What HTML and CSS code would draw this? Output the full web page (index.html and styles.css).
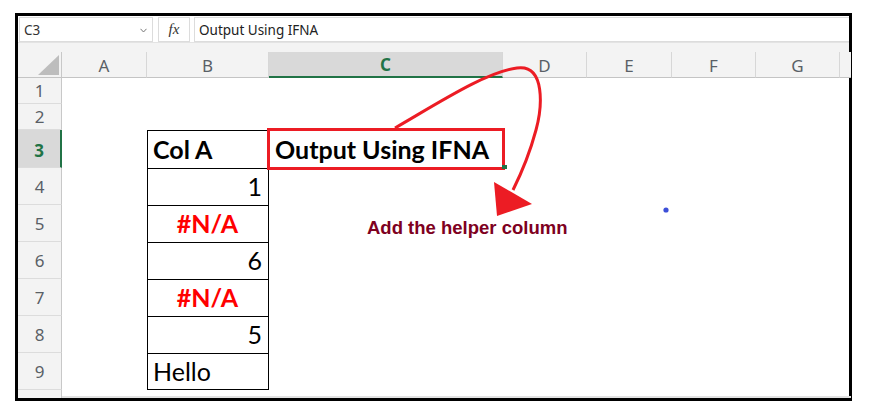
FILE: index.html
```html
<!DOCTYPE html>
<html>
<head>
<meta charset="utf-8">
<link rel="stylesheet" href="styles.css">
</head>
<body>
<div class="frame">
  <div class="toolbar">
    <div class="namebox"><span>C3</span>
      <svg class="chev" width="7" height="5" viewBox="0 0 7 5"><path d="M0.5 0.8 L3.5 4 L6.5 0.8" fill="none" stroke="#777" stroke-width="1"/></svg>
    </div>
    <div class="fxbox">fx</div>
    <div class="formula">Output Using IFNA</div>
  </div>
  <div class="strip"></div>
  <div class="sheet">
    <div class="corner"><div class="tri"></div></div>
    <div class="ch">A</div>
    <div class="ch">B</div>
    <div class="ch sel">C</div>
    <div class="ch">D</div>
    <div class="ch">E</div>
    <div class="ch">F</div>
    <div class="ch">G</div>
    <div class="ch last"></div>

    <div class="rh">1</div><div class="c"></div><div class="c"></div><div class="c"></div><div class="c"></div><div class="c"></div><div class="c"></div><div class="c"></div><div class="c"></div>
    <div class="rh">2</div><div class="c"></div><div class="c"></div><div class="c"></div><div class="c"></div><div class="c"></div><div class="c"></div><div class="c"></div><div class="c"></div>
    <div class="rh sel">3</div><div class="c"></div><div class="c t b left">Col A</div><div class="c active left b">Output Using IFNA<span class="handle"></span></div><div class="c"></div><div class="c"></div><div class="c"></div><div class="c"></div><div class="c"></div>
    <div class="rh">4</div><div class="c"></div><div class="c t right">1</div><div class="c"></div><div class="c"></div><div class="c"></div><div class="c"></div><div class="c"></div><div class="c"></div>
    <div class="rh">5</div><div class="c"></div><div class="c t center err">#N/A</div><div class="c note">Add the helper column</div><div class="c"></div><div class="c"></div><div class="c"></div><div class="c"></div><div class="c"></div>
    <div class="rh">6</div><div class="c"></div><div class="c t right">6</div><div class="c"></div><div class="c"></div><div class="c"></div><div class="c"></div><div class="c"></div><div class="c"></div>
    <div class="rh">7</div><div class="c"></div><div class="c t center err">#N/A</div><div class="c"></div><div class="c"></div><div class="c"></div><div class="c"></div><div class="c"></div><div class="c"></div>
    <div class="rh">8</div><div class="c"></div><div class="c t right">5</div><div class="c"></div><div class="c"></div><div class="c"></div><div class="c"></div><div class="c"></div><div class="c"></div>
    <div class="rh">9</div><div class="c"></div><div class="c t tl left">Hello</div><div class="c"></div><div class="c"></div><div class="c"></div><div class="c"></div><div class="c"></div><div class="c"></div>
    <div class="rh foot"></div><div class="bottom"></div>
  </div>
</div>
<svg class="overlay" width="878" height="405" viewBox="0 0 878 405">
  <path d="M395 128 C440 102 486 72 517 68 C546 64 542 108 536 130 C529 156 521 174 513 190" fill="none" stroke="#ec1c24" stroke-width="3"/>
  <polygon points="494,182 532,204 497,216" fill="#ec1c24"/>
  <circle cx="666" cy="210" r="2.6" fill="#3c4fd8"/>
</svg>
</body>
</html>
```
FILE: styles.css
```css
html, body { margin: 0; padding: 0; background: #fff; }
body { position: relative; width: 878px; height: 405px; overflow: hidden; }

.frame {
  position: relative;
  margin: 13px 0 0 15px;
  width: 831px;
  height: 382px;
  border: 3px solid #000;
  background: #fff;
  display: flex;
  flex-direction: column;
  font-family: Lato, "Liberation Sans", sans-serif;
}

.toolbar {
  height: 27px;
  display: flex;
  align-items: flex-start;
  padding: 1px 0 0 1px;
  box-sizing: border-box;
  border-bottom: 1px solid #e3e3e3;
  background: #fff;
  gap: 5px;
}
.namebox {
  width: 134px; height: 25px; box-sizing: border-box;
  border: 1px solid #dcdcdc;
  display: flex; align-items: center; justify-content: space-between;
  padding: 0 5px 0 4px;
  font-family: "Noto Sans", sans-serif; font-size: 13.5px; color: #333;
}
.chev { margin-top: 1px; }
.fxbox {
  width: 32px; height: 25px; box-sizing: border-box;
  border: 1px solid #dcdcdc;
  display: flex; align-items: center; justify-content: center;
  font-family: "Liberation Serif", serif; font-style: italic; font-size: 15px; color: #333;
}
.formula {
  flex: 1; height: 25px; box-sizing: border-box;
  border: 1px solid #dcdcdc; border-right: none;
  margin-left: -1px;
  display: flex; align-items: center;
  padding-left: 4px;
  font-family: "Noto Sans", sans-serif; font-size: 13.5px; color: #222;
}

.strip { height: 9px; background: #f3f3f3; }

.sheet {
  flex: 1;
  display: grid;
  grid-template-columns: 44px 85px 122px 234px 84px 85px 84px 84px 1fr;
  grid-template-rows: 26px 26px 26px 38px repeat(6, 37px) 1fr;
}

.corner {
  background: #f3f3f3;
  border-right: 1px solid #c8c8c8;
  border-bottom: 1px solid #c4c4c4;
  box-sizing: border-box;
  position: relative;
}
.tri {
  position: absolute; right: 2px; bottom: 2px;
  width: 21px; height: 20px;
  background: #bdbdbd;
  clip-path: polygon(100% 0, 100% 100%, 0 100%);
}

.ch {
  background: #f3f3f3;
  border-right: 1px solid #d7d7d7;
  border-bottom: 1px solid #c4c4c4;
  box-sizing: border-box;
  display: flex; align-items: center; justify-content: center;
  font-family: "Noto Sans", sans-serif; font-size: 17px; color: #5a5f66;
  padding-top: 1px;
}
.ch.sel {
  background: #d9d9d9;
  border-bottom: 2px solid #217346;
  color: #217346; font-weight: bold;
}
.ch.last { border-right: none; }

.rh {
  background: #f3f3f3;
  border-right: 1px solid #c8c8c8;
  border-bottom: 1px solid #dcdcdc;
  box-sizing: border-box;
  display: flex; align-items: center; justify-content: center;
  font-family: "Noto Sans", sans-serif; font-size: 17px; color: #5a5f66;
}
.rh.sel {
  background: #d9d9d9;
  border-right: 2px solid #217346;
  color: #217346; font-weight: bold;
  padding-top: 4px;
}
.rh.foot { border-bottom: none; }

.c {
  box-sizing: border-box;
  display: flex;
  align-items: flex-end;
  font-size: 25px;
  line-height: 1;
  padding: 0 6px 6px 5px;
  color: #000;
  white-space: nowrap;
  position: relative;
}
.c.t { border: 1px solid #000; border-bottom: none; }
.c.tl { border-bottom: 1px solid #000; padding-bottom: 5px; }
.b { font-weight: bold; }
.left { justify-content: flex-start; }
.right { justify-content: flex-end; }
.center { justify-content: center; }
.err { color: #ff0000; font-weight: bold; }

.active {
  outline: 3px solid #ec1c24;
  outline-offset: -1px;
  padding-left: 6px;
  z-index: 1;
}
.handle {
  position: absolute; right: -4px; bottom: -1px;
  width: 5px; height: 4px; background: #217346;
}

.note {
  overflow: visible;
  padding-left: 98px;
  padding-bottom: 5px;
  font-family: "Liberation Sans", Arial, sans-serif;
  font-size: 18.5px;
  font-weight: bold;
  color: #7e0021;
  z-index: 2;
}

.bottom {
  grid-column: 2 / -1;
  border-bottom: 2px solid #e2e2e2;
  border-top: none;
}

.overlay { position: absolute; left: 0; top: 0; pointer-events: none; z-index: 5; }
```
